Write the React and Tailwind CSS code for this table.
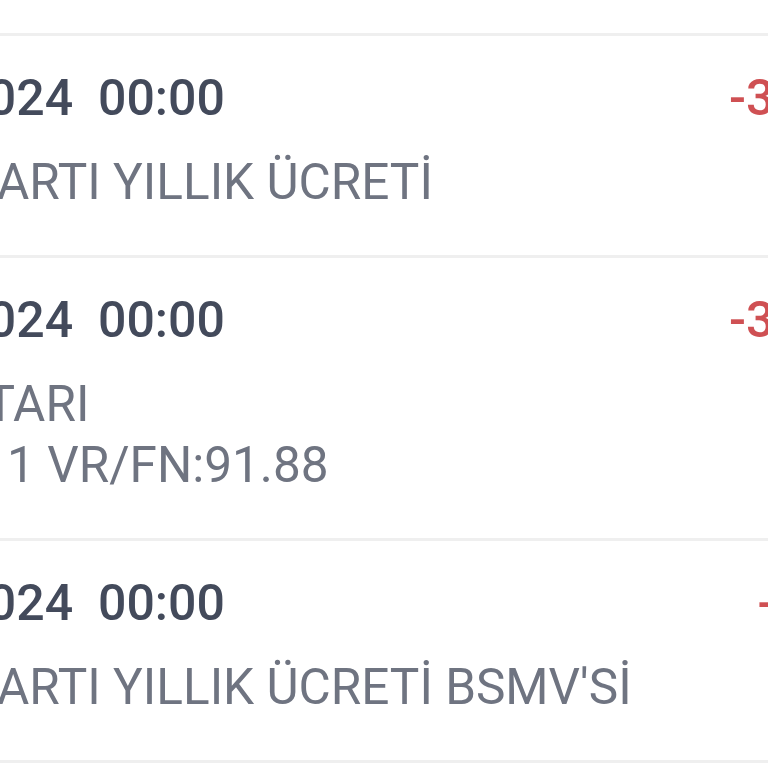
import React from 'react';

const rows = [
  {
    date: '13.05.2024',
    time: '00:00',
    lines: ['KREDİ KARTI YILLIK ÜCRETİ'],
    amount: '-350,00 TL',
  },
  {
    date: '13.05.2024',
    time: '00:00',
    lines: ['KDV TUTARI', 'EKSTRE 1 VR/FN:91.88'],
    amount: '-312,45 TL',
  },
  {
    date: '13.05.2024',
    time: '00:00',
    lines: ["KREDİ KARTI YILLIK ÜCRETİ BSMV'Sİ"],
    amount: '-17,50 TL',
  },
];

const TransactionRow = ({ tx }) => (
  <div className="flex justify-between border-b-[3px] border-[#efefef] pt-[32px] pb-[42px]">
    <div className="flex flex-col">
      <div className="text-[50px] leading-[60px] font-medium text-[#434a5b] whitespace-pre">
        {tx.date}  {tx.time}
      </div>
      <div className="mt-[24px] text-[49.5px] leading-[61px] text-[#6f7481] whitespace-pre">
        {tx.lines.map((line) => (
          <div key={line}>{line}</div>
        ))}
      </div>
    </div>
    <div className="text-[50px] leading-[60px] font-medium text-[#cf5053] whitespace-pre">
      {tx.amount}
    </div>
  </div>
);

export default function App() {
  return (
    <div
      className="w-[768px] h-[768px] overflow-hidden bg-white"
      style={{ fontFamily: 'Roboto, "Noto Sans", sans-serif' }}
    >
      <div className="w-[1150px] ml-[-182px]">
        {/* tail of the previous transaction */}
        <div className="h-[36px] border-b-[3px] border-[#efefef]" />
        {rows.map((tx, i) => (
          <TransactionRow key={i} tx={tx} />
        ))}
      </div>
    </div>
  );
}
